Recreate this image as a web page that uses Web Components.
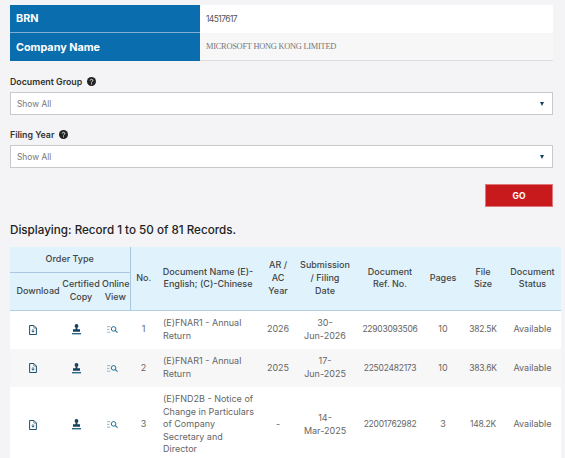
<!DOCTYPE html>
<html>
<head>
<meta charset="utf-8">
<title>Filing records</title>
<style>
  html, body {
    margin: 0;
    height: 458px;
    overflow: hidden;
    background: #f4f4f6;
    font-family: Inter, "Open Sans", sans-serif;
    color: #444;
  }
  main {
    display: flex;
    flex-direction: column;
    padding: 5px 4px 0 10px;
  }
</style>
</head>
<body>
<main>
  <company-info brn="14517617" company="MICROSOFT HONG KONG LIMITED"></company-info>
  <filter-select label="Document Group"></filter-select>
  <filter-select label="Filing Year"></filter-select>
  <go-button>GO</go-button>
  <records-title>Displaying: Record 1 to 50 of 81 Records.</records-title>
  <records-table></records-table>
</main>

<script>
class CompanyInfo extends HTMLElement {
  constructor() {
    super();
    this.shadowDOM = this.attachShadow({mode: 'open'});
  }

  connectedCallback() {
    this.shadowDOM.innerHTML = `
      <style>
        :host {
          display: grid;
          grid-template-columns: 190px 353px;
          grid-template-rows: 28px 28px;
          width: 543px;
        }
        .key {
          display: flex;
          align-items: center;
          padding-left: 6px;
          background: #0a6eae;
          border-bottom: 1px solid #7fb0d4;
          color: #fff;
          font-size: 10.8px;
          font-weight: 700;
        }
        .key.last { border-bottom: 0; }
        .val {
          display: flex;
          align-items: center;
          padding-left: 6px;
          background: #fff;
          color: #555;
          font-size: 8.5px;
          letter-spacing: -0.6px;
        }
        .val.name {
          background: #f7f7f8;
          border-bottom: 1px solid #dcdcdf;
          color: #777;
          font-family: "Liberation Serif", serif;
          font-size: 8.4px;
          letter-spacing: -0.25px;
        }
      </style>
      <div class="key">BRN</div>
      <div class="val">${this.getAttribute('brn')}</div>
      <div class="key last">Company Name</div>
      <div class="val name">${this.getAttribute('company')}</div>
    `;
  }
}

class FilterSelect extends HTMLElement {
  constructor() {
    super();
    this.shadowDOM = this.attachShadow({mode: 'open'});
  }

  connectedCallback() {
    this.shadowDOM.innerHTML = `
      <style>
        :host {
          display: block;
          width: 543px;
          padding-top: 12px;
        }
        :host(:first-of-type) { padding-top: 13px; }
        .label {
          display: flex;
          align-items: center;
          gap: 5px;
          height: 14px;
          margin-bottom: 4px;
          color: #333;
          font-size: 8.8px;
          font-weight: 600;
        }
        .help { width: 9px; height: 9px; }
        .box {
          display: flex;
          align-items: center;
          justify-content: space-between;
          box-sizing: border-box;
          height: 23px;
          padding: 0 8px 0 6px;
          background: #fff;
          border: 1px solid #c9c9cc;
          color: #777;
          font-size: 8.4px;
        }
        .arrow {
          width: 0;
          height: 0;
          border-left: 2.5px solid transparent;
          border-right: 2.5px solid transparent;
          border-top: 4px solid #17425f;
        }
      </style>
      <div class="label">
        <span>${this.getAttribute('label')}</span>
        <svg class="help" viewBox="0 0 10 10">
          <circle cx="5" cy="5" r="5" fill="#222"/>
          <path d="M3.5 3.9a1.5 1.4 0 1 1 2.3 1.2c-.5.3-.8.5-.8 1" fill="none" stroke="#fff" stroke-width="1"/>
          <circle cx="5" cy="7.6" r=".6" fill="#fff"/>
        </svg>
      </div>
      <div class="box"><span>Show All</span><i class="arrow"></i></div>
    `;
  }
}

class GoButton extends HTMLElement {
  constructor() {
    super();
    this.shadowDOM = this.attachShadow({mode: 'open'});
  }

  connectedCallback() {
    this.shadowDOM.innerHTML = `
      <style>
        :host {
          display: flex;
          justify-content: flex-end;
          width: 543px;
          margin-top: 16px;
        }
        button {
          width: 68px;
          height: 23px;
          padding: 0;
          background: #c8191c;
          border: 1px solid #e0787a;
          color: #fff;
          font-family: inherit;
          font-size: 8.5px;
          font-weight: 700;
        }
      </style>
      <button><slot></slot></button>
    `;
  }
}

class RecordsTitle extends HTMLElement {
  constructor() {
    super();
    this.shadowDOM = this.attachShadow({mode: 'open'});
  }

  connectedCallback() {
    this.shadowDOM.innerHTML = `
      <style>
        :host {
          display: block;
          margin-top: 15px;
          height: 25px;
          color: #222;
          font-size: 11.65px;
          font-weight: 500;
          line-height: 17px;
        }
      </style>
      <slot></slot>
    `;
  }
}

const ICONS = [`
  <svg width="8" height="10" viewBox="0 0 8 10" fill="none" stroke="#1d4f6e">
    <path d="M.6.5h4.3L7.4 3v6.5H.6z" stroke-width="1"/>
    <path d="M4.8.7v2.4h2.4" stroke-width=".6"/>
    <path d="M4 4.2v2.9M2.7 5.8L4 7.2l1.3-1.4" stroke-width=".9"/>
  </svg>`, `
  <svg width="9" height="11" viewBox="0 0 9 11" fill="#17425f">
    <circle cx="4.5" cy="1.9" r="1.9"/>
    <path d="M3.6 3.3h1.8v2.2H3.6zM1 5.2h7v2.6H1z"/>
    <path d="M0 9h9v1.4H0z" fill="#2f6685"/>
  </svg>`, `
  <svg width="11" height="7" viewBox="0 0 11 7" fill="none" stroke="#1f6f94">
    <path d="M0 .7h3.4M0 3.4h2.4M0 6.2h3.4" stroke="#6a98ad" stroke-width=".7"/>
    <circle cx="6.6" cy="2.9" r="2.3" stroke-width="1"/>
    <path d="M8.3 4.6l2.2 2" stroke-width="1.1"/>
  </svg>`];

const RECORDS = [
  ['1', '(E)FNAR1 - Annual Return', '2026', '30-<br>Jun-2026', '22903093506', '10', '382.5K', 'Available', 39],
  ['2', '(E)FNAR1 - Annual Return', '2025', '17-<br>Jun-2025', '22502482173', '10', '383.6K', 'Available', 38],
  ['3', '(E)FND2B - Notice of Change in Particulars of Company Secretary and Director', '-', '14-<br>Mar-2025', '22001762982', '3', '148.2K', 'Available', 75],
];

class RecordsTable extends HTMLElement {
  constructor() {
    super();
    this.shadowDOM = this.attachShadow({mode: 'open'});
  }

  connectedCallback() {
    const rows = RECORDS.map((r, i) => `
        <tr class="${i % 2 ? 'odd' : ''}" style="height:${r[8]}px">
          ${ICONS.map((svg, n) => `<td class="icon i${n}">${svg}</td>`).join('')}
          <td>${r[0]}</td>
          <td class="name">${r[1]}</td>
          <td>${r[2]}</td>
          <td>${r[3]}</td>
          <td class="num">${r[4]}</td>
          <td>${r[5]}</td>
          <td class="num">${r[6]}</td>
          <td class="status">${r[7]}</td>
        </tr>
      `).join('');

    this.shadowDOM.innerHTML = `
      <style>
        :host {
          display: block;
          width: 551px;
        }
        table {
          width: 551px;
          table-layout: fixed;
          border-collapse: collapse;
          font-size: 9px;
          line-height: 12.6px;
          color: #666;
        }
        th {
          padding: 0 1px;
          background: #e0f3fd;
          color: #444;
          font-weight: 500;
          white-space: nowrap;
        }
        td {
          padding: 0 1px;
          text-align: center;
        }
        tbody tr { background: #fff; }
        tbody tr.odd { background: #f7f7f8; }
        td svg { display: block; margin: 0 auto; }
        td.i0 { padding-right: 7px; }
        td.i1 { padding-right: 10px; }
        td.i2 { padding-right: 7px; }
        td.name { padding-left: 6px; text-align: left; }
        td.num { font-size: 8.5px; letter-spacing: -0.25px; }
        td.status, th.status { padding-right: 4px; }
        th.first { padding-left: 6px; }
        thead tr.top { height: 25px; }
        thead tr.sub { height: 38px; }
        thead tr.sub th, th.span { border-bottom: 1px solid #b3cfe2; }
        .group { border-bottom: 1px solid #a9c8df; border-right: 1px solid #a9c8df; }
        thead tr.sub th.end { border-right: 1px solid #a9c8df; }
      </style>
      <table>
        <colgroup>
          <col style="width:51px"><col style="width:40px"><col style="width:29px">
          <col style="width:27px"><col style="width:102px"><col style="width:38px">
          <col style="width:56px"><col style="width:74px"><col style="width:32px">
          <col style="width:48px"><col style="width:54px">
        </colgroup>
        <thead>
          <tr class="top">
            <th class="group" colspan="3">Order Type</th>
            <th class="span" rowspan="2">No.</th>
            <th class="span" rowspan="2">Document Name (E)-<br>English; (C)-Chinese</th>
            <th class="span" rowspan="2">AR /<br>AC<br>Year</th>
            <th class="span" rowspan="2">Submission<br>/ Filing<br>Date</th>
            <th class="span" rowspan="2">Document<br>Ref. No.</th>
            <th class="span" rowspan="2">Pages</th>
            <th class="span" rowspan="2">File<br>Size</th>
            <th class="span status" rowspan="2">Document<br>Status</th>
          </tr>
          <tr class="sub">
            <th class="first">Download</th>
            <th>Certified<br>Copy</th>
            <th class="end">Online<br>View</th>
          </tr>
        </thead>
        <tbody>${rows}</tbody>
      </table>
    `;
  }
}

customElements.define('company-info', CompanyInfo);
customElements.define('filter-select', FilterSelect);
customElements.define('go-button', GoButton);
customElements.define('records-title', RecordsTitle);
customElements.define('records-table', RecordsTable);
</script>
</body>
</html>
